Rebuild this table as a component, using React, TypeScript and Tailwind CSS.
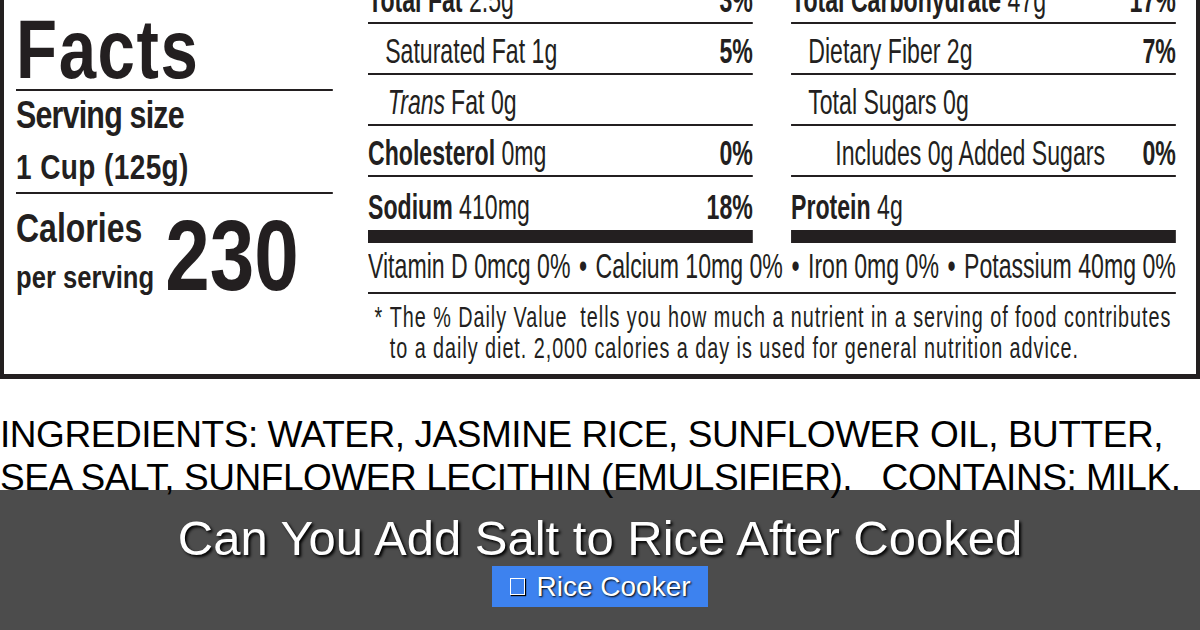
const sans = "font-['Liberation_Sans',Arial,sans-serif]";

type Row = { label: string; bold?: boolean; italic?: string; amount: string; dv?: string; indent?: string };

const leftRows: Row[] = [
  { label: "Total Fat", bold: true, amount: "2.5g", dv: "3%" },
  { label: "Saturated Fat", amount: "1g", dv: "5%", indent: "pl-[26px]" },
  { label: "Fat", italic: "Trans", amount: "0g", indent: "pl-[30px]" },
  { label: "Cholesterol", bold: true, amount: "0mg", dv: "0%" },
];

const rightRows: Row[] = [
  { label: "Total Carbohydrate", bold: true, amount: "47g", dv: "17%" },
  { label: "Dietary Fiber", amount: "2g", dv: "7%", indent: "pl-[26px]" },
  { label: "Total Sugars", amount: "0g", indent: "pl-[26px]" },
  { label: "Includes 0g Added Sugars", amount: "", dv: "0%", indent: "pl-[67px]" },
];

const minerals = ["Vitamin D 0mcg 0%", "Calcium 10mg 0%", "Iron 0mg 0%", "Potassium 40mg 0%"];

function NutrientRow({ row }: { row: Row }) {
  return (
    <div className={`flex h-[51px] items-end justify-between border-b-2 border-[#231f20] pb-[5px] ${row.indent ?? ""}`}>
      <span className="whitespace-nowrap">
        {row.italic ? <i className="mr-[9px]">{row.italic}</i> : null}
        {row.bold ? <b>{row.label}</b> : row.label}
        {row.amount ? ` ${row.amount}` : null}
      </span>
      {row.dv ? <b>{row.dv}</b> : null}
    </div>
  );
}

export default function App() {
  return (
    <div className={`relative h-[630px] w-[1200px] overflow-hidden bg-white text-[#231f20] ${sans}`}>
      <section className="flex h-[379px] overflow-hidden border-b-[5px] border-l-4 border-r-4 border-[#231f20]">
        {/* condensed type: laid out wide, squeezed horizontally */}
        <div className="ml-[12px] w-[317px] shrink-0">
          <div className="flex w-[396px] origin-left scale-x-[0.8] flex-col">
            <div className="h-[91px] border-b-2 border-[#231f20] pt-[7px] text-[84px] font-bold leading-none tracking-[2px]">Facts</div>
            <div className="pt-[5px] text-[38px] font-bold leading-none tracking-[-1px]">Serving size</div>
            <div className="pt-[15px] text-[35px] font-bold leading-none tracking-[0.5px]">1 Cup (125g)</div>
            <div className="mt-[8px] flex items-start gap-[14px] border-t-2 border-[#231f20] pt-[11px] font-bold leading-none">
              <div className="flex flex-col pt-[3px]">
                <span className="text-[40px]">Calories</span>
                <span className="mt-[13px] text-[32px]">per serving</span>
              </div>
              <span className="text-[100px]">230</span>
            </div>
          </div>
        </div>

        <div className="ml-[35px] w-[808px] shrink-0">
          <div className="flex w-[1224px] origin-left scale-x-[0.66] flex-col">
            <div className="-mt-[27px] grid grid-cols-2 gap-x-[58px] text-[35px] leading-none">
              <div className="flex flex-col">
                {leftRows.map((row) => <NutrientRow key={row.label + row.amount} row={row} />)}
                <div className="flex h-[53px] items-end justify-between pb-[6px]">
                  <span><b>Sodium</b> 410mg</span>
                  <b>18%</b>
                </div>
                <div className="h-[13px] bg-[#231f20]" />
              </div>
              <div className="flex flex-col">
                {rightRows.map((row) => <NutrientRow key={row.label} row={row} />)}
                <div className="flex h-[53px] items-end pb-[6px]">
                  <span><b>Protein</b> 4g</span>
                </div>
                <div className="h-[13px] bg-[#231f20]" />
              </div>
            </div>
            <div className="flex h-[51px] items-end justify-between whitespace-nowrap border-b-2 border-[#231f20] pb-[9px] text-[35px] leading-none">
              {minerals.map((item, i) => (
                <span key={item} className="contents">
                  {i > 0 ? <span>•</span> : null}
                  <span>{item}</span>
                </span>
              ))}
            </div>
            <div className="flex pl-[10px] pt-[7px] text-[30px] leading-[31px]">
              <span className="w-[23px] shrink-0">*</span>
              <p className="whitespace-nowrap tracking-[1.45px]">
                The % Daily Value&nbsp; tells you how much a nutrient in a serving of food contributes
                <br />
                to a daily diet. 2,000 calories a day is used for general nutrition advice.
              </p>
            </div>
          </div>
        </div>
      </section>

      <p className="whitespace-nowrap pt-[34px] text-[37px] leading-[43px] tracking-[-0.45px] text-black">
        INGREDIENTS: WATER, JASMINE RICE, SUNFLOWER OIL, BUTTER,
        <br />
        SEA SALT, SUNFLOWER LECITHIN (EMULSIFIER).&nbsp;&nbsp; CONTAINS: MILK.
      </p>

      <div className="absolute inset-x-0 bottom-0 flex h-[140px] flex-col items-center bg-black/70 pt-[24px] text-white">
        <h1 className="text-[49px] leading-none [text-shadow:2px_2px_3px_#000]">Can You Add Salt to Rice After Cooked</h1>
        <div className="mt-[3px] flex h-[41px] items-center gap-[11px] bg-[#3d82ef] pl-[18px] pr-[17px] text-[28px] [text-shadow:1px_1px_2px_#000]">
          <span className="h-[17px] w-[15px] border-[1.5px] border-white shadow-[1px_1px_1px_#000]" />
          <span>Rice Cooker</span>
        </div>
      </div>
    </div>
  );
}
